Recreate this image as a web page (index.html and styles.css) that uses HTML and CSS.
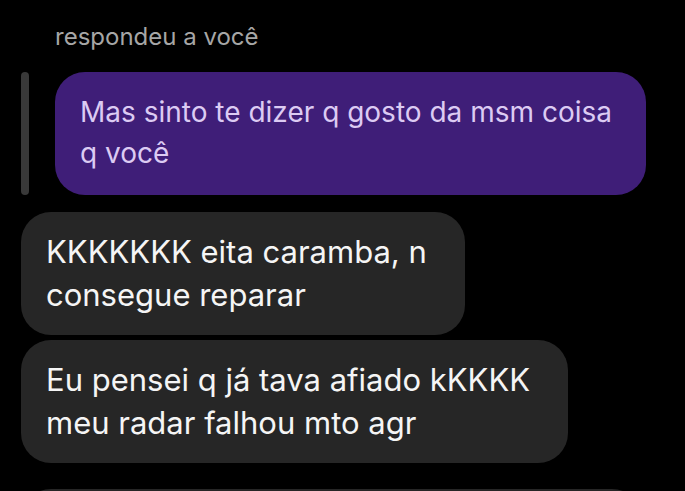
FILE: index.html
```html
<!DOCTYPE html>
<html lang="pt-BR">

<head>
     <meta charset="UTF-8">
     <meta name="viewport" content="width=device-width, initial-scale=1.0">
     <title>Conversa</title>
     <link rel="stylesheet" href="styles.css">
</head>

<body>
     <main class="thread">
          <div class="reply">
               <p class="reply-label">respondeu a você</p>
               <div class="reply-row">
                    <span class="reply-bar"></span>
                    <p class="bubble bubble-mine">Mas sinto te dizer q gosto da msm coisa<br>q você</p>
               </div>
          </div>

          <div class="group">
               <p class="bubble bubble-theirs">KKKKKKK eita caramba, n<br>consegue reparar</p>
               <p class="bubble bubble-theirs">Eu pensei q já tava afiado kKKKK<br>meu radar falhou mto agr</p>
          </div>

          <div class="group">
               <p class="bubble bubble-theirs">Mas relaxa q eu aprendo rápido kkkkk</p>
          </div>
     </main>
</body>

</html>
```

FILE: styles.css
```css
:root {
     --FONT-FAMILY: Inter, 'Noto Sans', 'Liberation Sans', sans-serif;
     --BG-color: #000;
     --LABEL-color: #a6a6a6;
     --BAR-color: #393939;
     --MINE-BACKGROUND-color: #3f1e78;
     --MINE-color: #dccbf3;
     --THEIRS-BACKGROUND-color: #262626;
     --THEIRS-color: #f5f5f5;
}

* {
     margin: 0;
     padding: 0;
}

*,
*::before,
*::after {
     box-sizing: border-box;
}

html,
body {
     background: var(--BG-color);
     height: 100%;
     overflow: hidden;
}

body {
     font-family: var(--FONT-FAMILY);
}

.thread {
     display: flex;
     flex-direction: column;
     padding: 22px 0 0 21px;
}

/* Réponse */
.reply-label {
     color: var(--LABEL-color);
     font-size: 24px;
     line-height: 29px;
     padding-left: 34px;
     margin-bottom: 21px;
}

.reply-row {
     display: flex;
     gap: 26px;
}

.reply-bar {
     width: 8px;
     flex: none;
     border-radius: 4px;
     background-color: var(--BAR-color);
}

/* Bulles */
.bubble {
     width: fit-content;
     border-radius: 30px;
}

.bubble-mine {
     font-size: 28px;
     line-height: 41px;
     padding: 20px 34px 21px 25px;
     background-color: var(--MINE-BACKGROUND-color);
     color: var(--MINE-color);
}

.bubble-theirs {
     font-size: 31px;
     line-height: 43px;
     padding: 18px 38px 19px 25px;
     background-color: var(--THEIRS-BACKGROUND-color);
     color: var(--THEIRS-color);
}

.group {
     display: flex;
     flex-direction: column;
     gap: 5px;
     margin-top: 17px;
}

.group + .group {
     margin-top: 26px;
}
```
